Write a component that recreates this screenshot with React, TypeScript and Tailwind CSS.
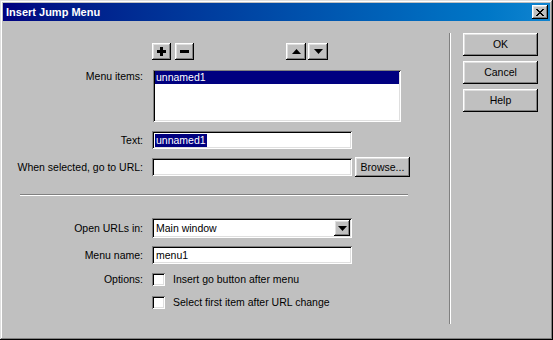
import type { ReactNode } from "react"

const raised =
  "bg-[#c0c0c0] shadow-[inset_-1px_-1px_#000,inset_1px_1px_#fff,inset_-2px_-2px_#808080,inset_2px_2px_#dfdfdf]"
const sunken =
  "bg-white shadow-[inset_1px_1px_#808080,inset_-1px_-1px_#fff,inset_2px_2px_#000,inset_-2px_-2px_#dfdfdf]"

function Btn({ className, children }: { className: string; children: ReactNode }) {
  return <div className={`${raised} ${className} flex items-center justify-center`}>{children}</div>
}

function Label({ children }: { children: ReactNode }) {
  return <div className="w-[140px] shrink-0 text-right">{children}</div>
}

function Plus() {
  return (
    <svg width="9" height="9" viewBox="0 0 9 9">
      <rect x="3" y="0" width="3" height="9" fill="#000" />
      <rect x="0" y="3" width="9" height="3" fill="#000" />
    </svg>
  )
}

function Minus() {
  return (
    <svg width="9" height="9" viewBox="0 0 9 9">
      <rect x="0" y="3" width="9" height="3" fill="#000" />
    </svg>
  )
}

function Tri({ down }: { down?: boolean }) {
  return (
    <svg width="9" height="5" viewBox="0 0 9 5">
      <polygon points={down ? "0,0 9,0 4.5,5" : "0,5 9,5 4.5,0"} fill="#000" />
    </svg>
  )
}

function Check({ children }: { children: ReactNode }) {
  return (
    <div className="flex items-center h-[13px]">
      <div className={`${sunken} w-[13px] h-[13px] shrink-0`} />
      <span className="ml-[8px]">{children}</span>
    </div>
  )
}

export default function App() {
  return (
    <div
      className="w-[553px] h-[340px] bg-[#c0c0c0] p-[3px] flex flex-col text-[10.5px] leading-[13px] text-black shadow-[inset_-1px_-1px_#000,inset_1px_1px_#dfdfdf,inset_-2px_-2px_#808080,inset_2px_2px_#fff]"
      style={{ fontFamily: '"Liberation Sans", Arial, sans-serif' }}
    >
      <div className="h-[18px] bg-linear-to-r from-[#000080] to-[#1084d0] flex items-center justify-between pl-[3px] pr-[2px]">
        <span className="text-white font-bold text-[11px]">Insert Jump Menu</span>
        <Btn className="w-[16px] h-[14px]">
          <svg width="8" height="7" viewBox="0 0 8 7">
            <path d="M0 0h2v1h1v1h2v-1h1v-1h2v1h-1v1h-1v1h-1v1h1v1h1v1h1v1h-2v-1h-1v-1h-2v1h-1v1h-2v-1h1v-1h1v-1h1v-1h-1v-1h-1v-1h-1z" fill="#000" />
          </svg>
        </Btn>
      </div>

      <div className="flex flex-row flex-1">
        <div className="w-[446px] flex flex-col">
          <div className="mt-[22px] flex h-[17px] pl-[149px]">
            <Btn className="w-[19px] h-[17px]"><Plus /></Btn>
            <Btn className="w-[19px] h-[17px] ml-[4px]"><Minus /></Btn>
            <Btn className="w-[20px] h-[17px] ml-[92px]"><Tri /></Btn>
            <Btn className="w-[20px] h-[17px] ml-[2px]"><Tri down /></Btn>
          </div>

          <div className="mt-[10px] flex items-start gap-[9px]">
            <Label>Menu items:</Label>
            <div className={`${sunken} ml-px w-[248px] h-[52px] p-[2px]`}>
              <div className="bg-[#000080] text-white h-[13px] pl-[1px] -mt-px">unnamed1</div>
            </div>
          </div>

          <div className="mt-[9px] flex items-center gap-[9px] h-[18px]">
            <Label>Text:</Label>
            <div className={`${sunken} w-[200px] h-[18px] flex items-center pl-[3px]`}>
              <span className="bg-[#000080] text-white px-px">unnamed1</span>
            </div>
          </div>

          <div className="mt-[8px] flex items-center gap-[9px] h-[20px]">
            <Label>When selected, go to URL:</Label>
            <div className={`${sunken} w-[200px] h-[18px]`} />
            <Btn className="w-[55px] h-[20px] -ml-[6px]">Browse...</Btn>
          </div>

          <div className="mt-[17px] ml-[17px] w-[388px] border-t border-t-[#808080] border-b border-b-white" />

          <div className="mt-[22px] flex items-center gap-[9px] h-[20px]">
            <Label>Open URLs in:</Label>
            <div className={`${sunken} w-[200px] h-[20px] flex items-center justify-between pl-[4px] pr-[2px]`}>
              <span>Main window</span>
              <Btn className="w-[16px] h-[16px]"><Tri down /></Btn>
            </div>
          </div>

          <div className="mt-[8px] flex items-center gap-[9px] h-[18px]">
            <Label>Menu name:</Label>
            <div className={`${sunken} w-[200px] h-[18px] flex items-center pl-[4px]`}>menu1</div>
          </div>

          <div className="mt-[9px] flex items-center gap-[9px]">
            <Label>Options:</Label>
            <Check>Insert go button after menu</Check>
          </div>

          <div className="mt-[10px] flex items-center gap-[9px]">
            <div className="w-[140px] shrink-0" />
            <Check>Select first item after URL change</Check>
          </div>
        </div>

        <div className="mt-[12px] h-[291px] w-[2px] border-l border-l-[#808080] border-r border-r-white" />

        <div className="ml-[12px] mt-[12px] flex flex-col gap-[5px]">
          <Btn className="w-[75px] h-[23px]">OK</Btn>
          <Btn className="w-[75px] h-[23px]">Cancel</Btn>
          <Btn className="w-[75px] h-[23px]">Help</Btn>
        </div>
      </div>
    </div>
  )
}
